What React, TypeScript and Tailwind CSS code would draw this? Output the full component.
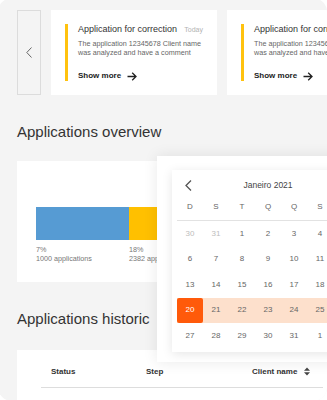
import React from "react";

const WEEKS = [
  [30, 31, 1, 2, 3, 4, 5],
  [6, 7, 8, 9, 10, 11, 12],
  [13, 14, 15, 16, 17, 18, 19],
  [20, 21, 22, 23, 24, 25, 26],
  [27, 28, 29, 30, 31, 1, 2],
];

const DAY_NAMES = ["D", "S", "T", "Q", "Q", "S", "S"];

function Arrow() {
  return (
    <svg width="10" height="9" viewBox="0 0 10 9" fill="none" stroke="#222" strokeWidth="1.3">
      <path d="M0.5 4.5h8.5M5.2 0.8 9 4.5 5.2 8.2" />
    </svg>
  );
}

function Notice() {
  return (
    <div className="flex h-[85px] w-[166px] shrink-0 bg-white p-[14px]">
      <div className="w-[3px] shrink-0 bg-[#ffc20e]" />
      <div className="ml-[10px] flex min-w-0 flex-1 flex-col whitespace-nowrap">
        <div className="flex items-start justify-between">
          <span className="text-[9px] leading-[11px] text-[#333]">Application for correction</span>
          <span className="text-[7px] leading-[11px] text-[#b3b3b3]">Today</span>
        </div>
        <p className="mt-[4px] text-[7.2px] leading-[9px] text-[#666]">
          The application 12345678 Client name
          <br />
          was analyzed and have a comment
        </p>
        <div className="mt-[14px] flex items-center gap-[6px]">
          <span className="text-[8px] font-bold leading-[10px] text-[#222]">Show more</span>
          <Arrow />
        </div>
      </div>
    </div>
  );
}

function Calendar() {
  return (
    <div className="absolute left-[159px] top-[158px] h-[206px] w-[220px] bg-white pl-[15px] pt-[14px] shadow-[0_0_14px_rgba(0,0,0,0.09)]">
      <div className="h-[182px] w-[192px] bg-white px-[5px] shadow-[0_2px_10px_rgba(0,0,0,0.1)]">
        <div className="relative flex h-[30px] items-center justify-center">
          <svg
            className="absolute left-[8px] top-[10px]"
            width="7"
            height="11"
            viewBox="0 0 7 11"
            fill="none"
            stroke="#555"
            strokeWidth="1.3"
          >
            <path d="M6 0.5 1 5.5l5 5" />
          </svg>
          <span className="text-[8.5px] text-[#444]">Janeiro 2021</span>
        </div>
        <div className="grid h-[14px] grid-cols-7 items-center">
          {DAY_NAMES.map((d, i) => (
            <span key={i} className="text-center text-[8px] text-[#666]">
              {d}
            </span>
          ))}
        </div>
        <div className="mt-[6px] border-t border-[#e2e2e2]">
          {WEEKS.map((week, r) => (
            <div key={r} className={`grid h-[25.5px] grid-cols-7 ${r === 3 ? "bg-[#fde0cc]" : ""}`}>
              {week.map((n, c) => {
                const muted = r === 0 && c < 2;
                const selected = r === 3 && c === 0;
                return (
                  <span
                    key={c}
                    className={`flex items-center justify-center text-[8px] ${
                      selected
                        ? "rounded-[2px] bg-[#ff5a0a] text-white"
                        : muted
                        ? "text-[#bdbdbd]"
                        : "text-[#666]"
                    }`}
                  >
                    {n}
                  </span>
                );
              })}
            </div>
          ))}
        </div>
      </div>
    </div>
  );
}

export default function App() {
  return (
    <div className="h-[400px] w-[327px] overflow-hidden bg-white font-['Liberation_Sans',Arial,sans-serif]">
      <div className="relative -ml-[2px] -mt-[2px] h-[403px] w-[329px] overflow-hidden rounded-[14px] bg-[#f4f4f4] pl-[19px] pt-[12px]">
        {/* notifications carousel */}
        <div className="flex h-[85px] gap-[10px]">
          <button className="flex w-[24px] shrink-0 items-center justify-center border border-[#dcdcdc] bg-[#f4f4f4]">
            <svg width="6" height="11" viewBox="0 0 6 11" fill="none" stroke="#666" strokeWidth="1">
              <path d="M5.5 0.5 0.8 5.5l4.7 5" />
            </svg>
          </button>
          <Notice />
          <Notice />
        </div>

        <h2 className="mt-[28px] text-[15px] leading-[18px] text-[#333]">Applications overview</h2>
        <div className="mt-[20px] h-[121px] w-[293px] bg-white px-[19px] pt-[46px]">
          <div className="flex h-[33px]">
            <div className="w-[93px] bg-[#569bd3]" />
            <div className="w-[110px] bg-[#ffc000]" />
            <div className="w-[52px] bg-[#d9d9d9]" />
          </div>
          <div className="mt-[6px] flex text-[7.2px] leading-[8.5px] text-[#777]">
            <div className="w-[93px]">
              <p>7%</p>
              <p>1000 applications</p>
            </div>
            <div className="w-[110px]">
              <p>18%</p>
              <p>2382 applications</p>
            </div>
          </div>
        </div>

        <h2 className="mt-[28px] text-[15px] leading-[18px] text-[#333]">Applications historic</h2>
        <div className="mt-[22px] h-[80px] w-[330px] bg-white px-[24px]">
          <div className="flex h-[38px] items-center border-b border-[#dddddd] pl-[10px] pt-[6px] text-[8px] font-bold text-[#333]">
            <span className="w-[95px]">Status</span>
            <span className="w-[106px]">Step</span>
            <span className="flex items-center gap-[7px] whitespace-nowrap">
              Client name
              <svg width="6" height="9" viewBox="0 0 6 9" fill="#444">
                <path d="M0 3.8 3 0.6 6 3.8Z" />
                <path d="M0 5.2 3 8.4 6 5.2Z" />
              </svg>
            </span>
          </div>
        </div>

        <Calendar />
      </div>
    </div>
  );
}
